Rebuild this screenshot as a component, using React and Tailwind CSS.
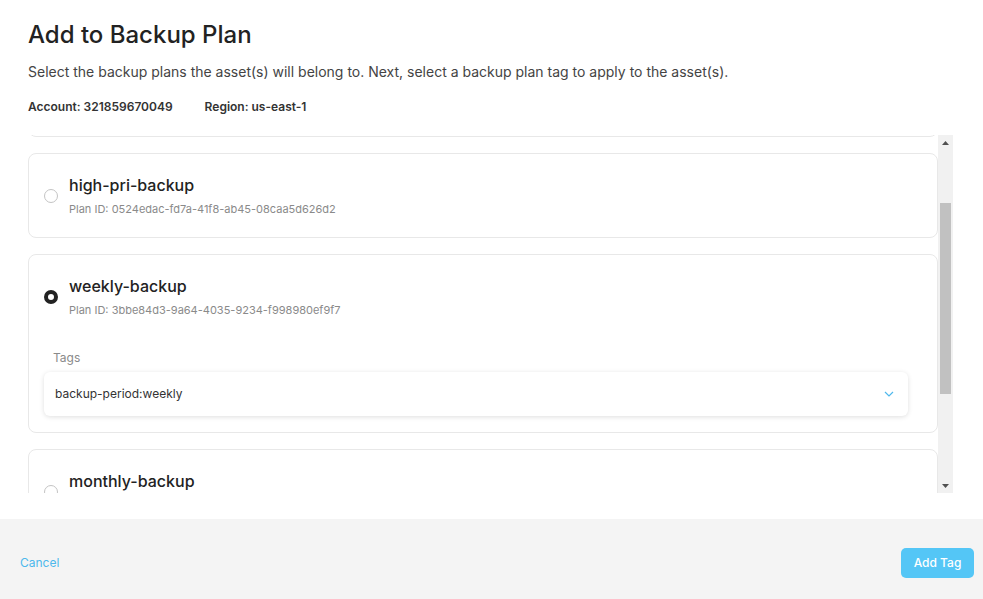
import { useLayoutEffect, useRef, useState } from "react";

const plans = [
  { id: "daily", name: "daily-backup", planId: "7d1e52a0-3c4b-4f1a-9e2d-5b8c0a6f41e3" },
  { id: "high", name: "high-pri-backup", planId: "0524edac-fd7a-41f8-ab45-08caa5d626d2" },
  { id: "weekly", name: "weekly-backup", planId: "3bbe84d3-9a64-4035-9234-f998980ef9f7", tag: "backup-period:weekly" },
  { id: "monthly", name: "monthly-backup", planId: "a91c0e4f-2b7d-4c58-8f13-6e0d9b2a7c45" },
  { id: "yearly", name: "yearly-backup", planId: "e4f7b2c9-1a3d-4e86-b5f0-2c9d8a7e6b13" },
];

function Radio({ checked }) {
  return checked ? (
    <span className="w-[14px] h-[14px] rounded-full border-[4px] border-[#222] bg-white shrink-0" />
  ) : (
    <span className="w-[14px] h-[14px] rounded-full border border-[#c4c4c4] bg-white shrink-0" />
  );
}

// classic scrollbar look, drawn beside the clipped list
function ScrollBar() {
  return (
    <div className="w-[15px] shrink-0 bg-[#f1f1f1] flex flex-col items-center">
      <div className="h-[15px] w-full flex items-center justify-center">
        <svg width="7" height="4" viewBox="0 0 7 4">
          <polygon points="0,4 3.5,0 7,4" fill="#505050" />
        </svg>
      </div>
      <div className="flex-1 w-full px-[2px]">
        <div className="mt-[53px] h-[191px] bg-[#c1c1c1]" />
      </div>
      <div className="h-[15px] w-full flex items-center justify-center">
        <svg width="7" height="4" viewBox="0 0 7 4">
          <polygon points="0,0 7,0 3.5,4" fill="#505050" />
        </svg>
      </div>
    </div>
  );
}

export default function App() {
  const [selected, setSelected] = useState("weekly");
  const listRef = useRef(null);

  useLayoutEffect(() => {
    if (listRef.current) listRef.current.scrollTop = 100;
  }, []);

  return (
    <div className="h-[599px] w-[983px] flex flex-col bg-white text-[#222] font-['Inter','Noto_Sans',sans-serif]">
      <div className="flex-1 flex flex-col">
        <div className="px-7 pt-[19px]">
          <h1 className="text-[24px] leading-8 font-medium text-[#222]">Add to Backup Plan</h1>
          <p className="mt-[11px] text-[14px] leading-5 text-[#444]">
            Select the backup plans the asset(s) will belong to. Next, select a backup plan tag to apply to the asset(s).
          </p>
          <div className="mt-[17px] flex gap-8 text-[12px] leading-4 font-semibold text-[#333]">
            <span>Account: 321859670049</span>
            <span>Region: us-east-1</span>
          </div>
        </div>

        {/* Plans list */}
        <div className="mt-[20px] ml-7 h-[358px] flex">
          <div ref={listRef} className="w-[910px] h-full overflow-hidden">
            <div className="pt-[17px] pb-4 space-y-4">
              {plans.map((plan) => {
                const isSelected = selected === plan.id;
                return (
                  <div
                    key={plan.id}
                    onClick={() => setSelected(plan.id)}
                    className="border border-[#e8e8e8] rounded-lg bg-white cursor-pointer"
                  >
                    <div className="flex items-center gap-[11px] pl-[15px] pt-[21px] pb-5">
                      <Radio checked={isSelected} />
                      <div>
                        <div className="text-[16px] leading-5 font-medium text-[#222]">{plan.name}</div>
                        <div className="mt-[6px] text-[11px] leading-4 text-[#8a8a8a]">Plan ID: {plan.planId}</div>
                      </div>
                    </div>
                    {isSelected && plan.tag && (
                      <div className="pl-[15px] pr-[29px] pb-4 -mt-5">
                        <div className="mt-[32px] pl-[9px] text-[12px] leading-4 text-[#8a8a8a]">Tags</div>
                        <div className="mt-[6px] h-[44px] flex items-center justify-between pl-[11px] pr-[14px] rounded-md bg-white shadow-[0_1px_5px_rgba(0,0,0,0.13)]">
                          <span className="text-[12px] text-[#333]">{plan.tag}</span>
                          <svg width="10" height="7" viewBox="0 0 10 7" fill="none">
                            <polyline points="1,1 5,5 9,1" stroke="#4fb8ec" strokeWidth="1.2" />
                          </svg>
                        </div>
                      </div>
                    )}
                  </div>
                );
              })}
            </div>
          </div>
          <ScrollBar />
        </div>
      </div>

      {/* Footer */}
      <div className="h-20 shrink-0 bg-[#f4f4f4] flex items-center justify-between pl-5 pr-[9px] pt-2">
        <button className="text-[12px] text-[#4db8ec]">Cancel</button>
        <button className="w-[73px] h-[30px] rounded-[5px] bg-[#54c6f6] text-white text-[12px] font-medium">
          Add Tag
        </button>
      </div>
    </div>
  );
}
